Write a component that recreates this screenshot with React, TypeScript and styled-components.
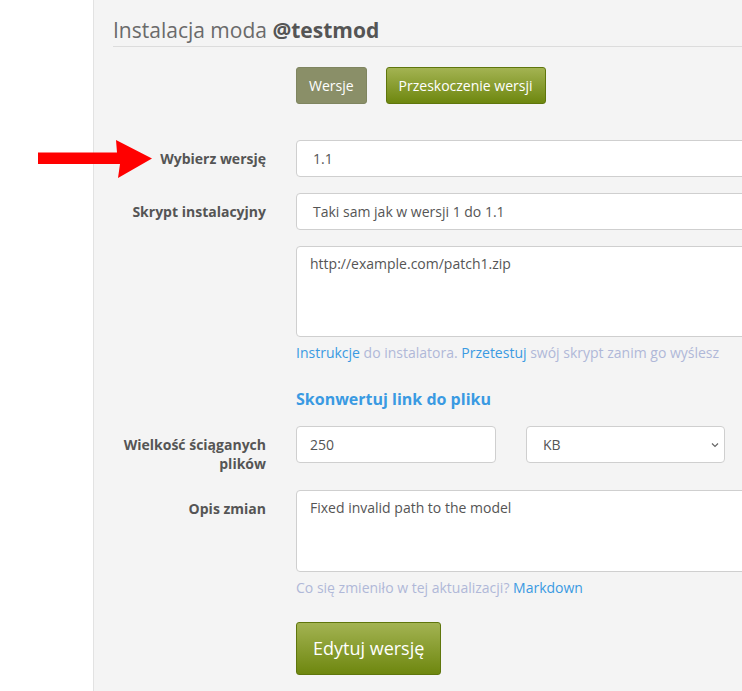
import React from "react";
import styled, { createGlobalStyle } from "styled-components";

const Global = createGlobalStyle`
  html, body { margin: 0; padding: 0; background: #fff; }
  body { overflow: hidden; font-family: "Open Sans", "Liberation Sans", sans-serif; }
  * { box-sizing: border-box; }
`;

const Page = styled.div`
  display: flex;
  width: 742px;
  height: 691px;
  overflow: hidden;
  position: relative;
`;

const Gutter = styled.div`
  width: 93px;
  flex: none;
  background: #fff;
`;

const Panel = styled.div`
  flex: none;
  width: 900px;
  background: #f4f4f4;
  border-left: 1px solid #e2e2e2;
  padding: 14px 0 0 19px;
`;

const Title = styled.h1`
  margin: 0;
  padding: 0;
  font-size: 21px;
  line-height: 32px;
  font-weight: 400;
  color: #6a6a6a;
  border-bottom: 1px solid #dcdcdc;
  b { color: #555; font-weight: 700; }
`;

const Form = styled.div`
  display: grid;
  grid-template-columns: 153px 560px;
  column-gap: 30px;
  align-items: start;
  margin-top: 20px;
`;

const ButtonRow = styled.div`
  grid-column: 2;
  display: flex;
  gap: 19px;
  margin-bottom: 36px;
`;

const Btn = styled.button<{ $muted?: boolean; $big?: boolean }>`
  font-family: "Open Sans", "Liberation Sans", sans-serif;
  font-size: ${(p) => (p.$big ? "18px" : "14px")};
  line-height: ${(p) => (p.$big ? "25px" : "20px")};
  padding: ${(p) => (p.$big ? "13px 16px 13px" : "8px 12px 7px")};
  color: #fff;
  border-radius: 3px;
  border: 1px solid ${(p) => (p.$muted ? "#7f8560" : "#5f760c")};
  background: ${(p) =>
    p.$muted ? "#8a8f68" : "linear-gradient(to bottom, #a3b352 0%, #6e870f 100%)"};
  cursor: pointer;
`;

const Label = styled.label`
  grid-column: 1;
  text-align: right;
  font-weight: 700;
  font-size: 14px;
  line-height: 19px;
  color: #555;
  padding-top: 9px;
`;

const Field = styled.div<{ $gap?: number }>`
  grid-column: 2;
  margin-bottom: ${(p) => p.$gap ?? 16}px;
`;

const boxStyles = `
  display: block;
  width: 100%;
  background: #fff;
  border: 1px solid #cfcfcf;
  border-radius: 4px;
  font-family: "Open Sans", "Liberation Sans", sans-serif;
  font-size: 14px;
  color: #555;
`;

const Select = styled.div<{ $width?: number }>`
  ${boxStyles}
  ${(p) => (p.$width ? `width: ${p.$width}px;` : "")}
  height: 37px;
  line-height: 35px;
  padding: 0 16px;
  display: flex;
  align-items: center;
  justify-content: space-between;
`;

const Input = styled.div<{ $width?: number }>`
  ${boxStyles}
  ${(p) => (p.$width ? `width: ${p.$width}px;` : "")}
  height: 37px;
  line-height: 35px;
  padding: 0 13px;
`;

const TextArea = styled.div<{ $h: number }>`
  ${boxStyles}
  height: ${(p) => p.$h}px;
  padding: 7px 13px;
  line-height: 20px;
`;

const Help = styled.div`
  font-size: 14px;
  line-height: 20px;
  color: #b0b8d8;
  margin-top: 6px;
  a { color: #3a9ae2; text-decoration: none; }
`;

const SubHead = styled.div`
  grid-column: 2;
  font-size: 16px;
  line-height: 22px;
  font-weight: 700;
  color: #3a9ae2;
  margin: 0 0 16px;
`;

const SplitRow = styled.div`
  display: flex;
  gap: 30px;
`;

const Chevron = styled.svg`
  width: 10px;
  height: 10px;
  margin-right: -12px;
`;

const Arrow = styled.svg`
  position: absolute;
  left: 38px;
  top: 140px;
  width: 115px;
  height: 39px;
`;

export default function App() {
  return (
    <>
      <Global />
      <Page>
        <Gutter />
        <Panel>
          <Title>
            Instalacja moda <b>@testmod</b>
          </Title>
          <Form>
            <ButtonRow>
              <Btn $muted>Wersje</Btn>
              <Btn>Przeskoczenie wersji</Btn>
            </ButtonRow>

            <Label>Wybierz wersję</Label>
            <Field>
              <Select>1.1</Select>
            </Field>

            <Label>Skrypt instalacyjny</Label>
            <Field>
              <Select>Taki sam jak w wersji 1 do 1.1</Select>
            </Field>

            <Field $gap={25}>
              <TextArea $h={91}>http://example.com/patch1.zip</TextArea>
              <Help>
                <a>Instrukcje</a> do instalatora. <a>Przetestuj</a> swój skrypt zanim go wyślesz
              </Help>
            </Field>

            <SubHead>Skonwertuj link do pliku</SubHead>

            <Label>
              Wielkość ściąganych
              <br />
              plików
            </Label>
            <Field $gap={27}>
              <SplitRow>
                <Input $width={200}>250</Input>
                <Select $width={199}>
                  <span>KB</span>
                  <Chevron viewBox="0 0 10 10">
                    <path d="M2 3.5 L5 6.5 L8 3.5" fill="none" stroke="#666" strokeWidth="1.2" />
                  </Chevron>
                </Select>
              </SplitRow>
            </Field>

            <Label>Opis zmian</Label>
            <Field $gap={24}>
              <TextArea $h={82}>Fixed invalid path to the model</TextArea>
              <Help>
                Co się zmieniło w tej aktualizacji? <a>Markdown</a>
              </Help>
            </Field>

            <Field>
              <Btn $big>Edytuj wersję</Btn>
            </Field>
          </Form>
        </Panel>
        <Arrow viewBox="0 0 115 39">
          <polygon points="0,12.5 79,12.5 78,0 114,18.5 80,38 82,24 0,24" fill="#ff0000" />
        </Arrow>
      </Page>
    </>
  );
}
